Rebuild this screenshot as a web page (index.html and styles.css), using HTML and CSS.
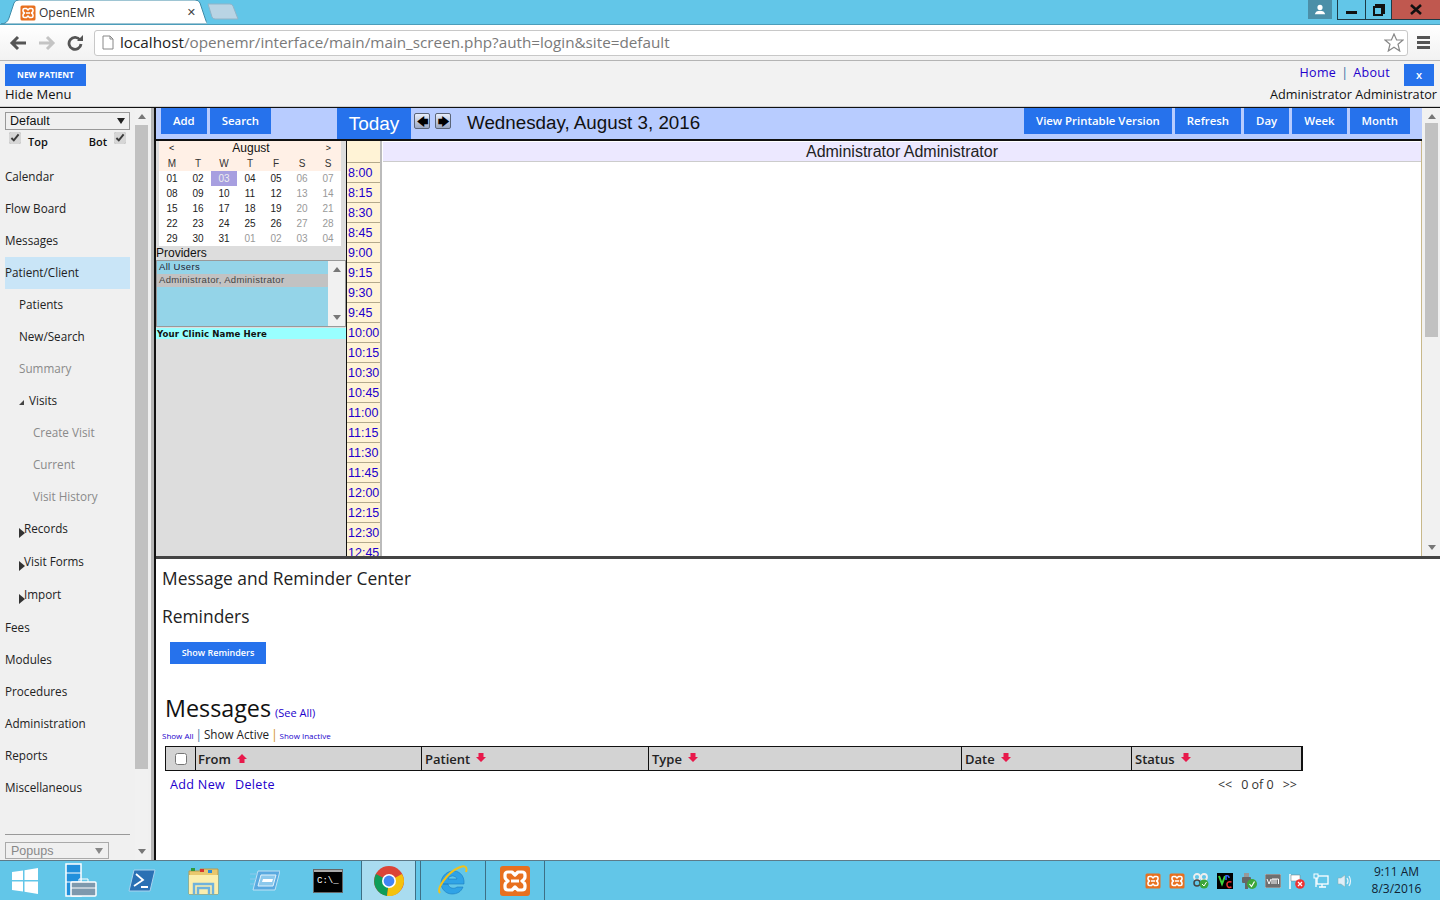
FILE: index.html
```html
<!DOCTYPE html>
<html lang="en">
<head>
<meta charset="utf-8">
<title>OpenEMR</title>
<link rel="stylesheet" href="styles.css">
</head>
<body>
<svg class="defs" width="0" height="0" aria-hidden="true">
  <symbol id="xampp" viewBox="0 0 32 32">
    <rect x="1" y="1" width="30" height="30" rx="3" fill="#e8701f"/>
    <path d="M13 7H9Q6 7 6 10V12Q6 14 9 16Q6 18 6 20V22Q6 25 9 25H13L16 22L19 25H23Q26 25 26 22V20Q26 18 23 16Q26 14 26 12V10Q26 7 23 7H19L16 10Z" fill="none" stroke="#fff" stroke-width="3.2" stroke-linejoin="round"/>
    <path d="M12 16H20" stroke="#fff" stroke-width="3"/>
  </symbol>
</svg>

<div class="tabstrip">
  <div class="tab">
    <svg class="tab-shape" width="206" height="25" viewBox="0 0 206 25"><path d="M0 25Q6 25 8 19L13 4Q14 1 18 1H194Q198 1 199 4L204 19Q205 23 207 25Z" fill="#fff" stroke="#3e8ba8"/></svg>
    <svg class="tab-icon" width="16" height="16"><use href="#xampp"/></svg>
    <span class="tab-title">OpenEMR</span>
    <span class="tab-close">✕</span>
  </div>
  <svg class="newtab" width="34" height="18" viewBox="0 0 34 18"><path d="M2 1H24Q26 1 27 3L32 16H9Q7 16 6 14Z" fill="#b9d4e4" stroke="#8fb4c8"/></svg>
  <div class="winctl">
    <div class="win-user"><svg width="12" height="12" viewBox="0 0 14 14"><circle cx="7" cy="4" r="3" fill="#fff"/><path d="M1 12Q2 8 7 8T13 12Z" fill="#fff"/></svg></div>
    <div class="win-btns">
      <div class="win-btn win-min"><i></i></div>
      <div class="win-btn win-max"><svg width="12" height="12" viewBox="0 0 12 12"><path d="M3 3V1H11V9H9M1 3H9V11H1Z" fill="none" stroke="#111" stroke-width="2"/></svg></div>
      <div class="win-btn win-close"><svg width="14" height="11" viewBox="0 0 14 11"><path d="M2 1L12 10M12 1L2 10" stroke="#111" stroke-width="2.6"/></svg></div>
    </div>
  </div>
</div>

<div class="toolbar">
  <svg class="nav-ico" width="18" height="16" viewBox="0 0 18 16"><path d="M9 2L3 8L9 14M3 8H17" fill="none" stroke="#555" stroke-width="3"/></svg>
  <svg class="nav-ico fwd" width="18" height="16" viewBox="0 0 18 16"><path d="M9 2L15 8L9 14M15 8H1" fill="none" stroke="#c4c4c4" stroke-width="3"/></svg>
  <svg class="nav-ico reload" width="16" height="16" viewBox="0 0 16 16"><path d="M13 5A6 6 0 1 0 14 9" fill="none" stroke="#555" stroke-width="2.8"/><path d="M10 6H16V0Z" fill="#555"/></svg>
  <div class="urlbar">
    <svg width="12" height="15" viewBox="0 0 12 15"><path d="M1 1H8L11 4V14H1ZM8 1V4H11" fill="#fff" stroke="#888"/></svg>
    <span class="url"><b>localhost</b>/openemr/interface/main/main_screen.php?auth=login&amp;site=default</span>
    <svg class="star" width="20" height="19" viewBox="0 0 20 19"><path d="M10 1L12.6 7H19L14 11.2L15.7 18L10 14.3L4.3 18L6 11.2L1 7H7.4Z" fill="#fff" stroke="#888" stroke-width="1.2"/></svg>
  </div>
  <div class="hamburger"><i></i><i></i><i></i></div>
</div>

<header class="apphead">
  <div class="apphead-left">
    <button class="btn btn-new">NEW PATIENT</button>
    <div class="hidemenu">Hide Menu</div>
  </div>
  <div class="apphead-right">
    <div class="toplinks">
      <a>Home</a><span class="pipe">|</span><a>About</a>
      <button class="btn btn-x">x</button>
    </div>
    <div class="username">Administrator Administrator</div>
  </div>
</header>

<div class="workspace">
  <nav class="sidebar">
    <div class="side-main">
      <div class="fake-select sel-default"><span>Default</span><i class="caret"></i></div>
      <div class="frames-row">
        <label class="chk"><input type="checkbox" checked><b>Top</b></label>
        <label class="chk"><b>Bot</b><input type="checkbox" checked></label>
      </div>
      <ul class="menu">
        <li>Calendar</li>
        <li>Flow Board</li>
        <li>Messages</li>
        <li class="active">Patient/Client</li>
        <li class="l1">Patients</li>
        <li class="l1">New/Search</li>
        <li class="l1 dim">Summary</li>
        <li class="l1 open"><i class="tri-open"></i>Visits</li>
        <li class="l2 dim">Create Visit</li>
        <li class="l2 dim">Current</li>
        <li class="l2 dim">Visit History</li>
        <li class="l1 shut"><i class="tri"></i>Records</li>
        <li class="l1 shut"><i class="tri"></i>Visit Forms</li>
        <li class="l1 shut"><i class="tri"></i>Import</li>
        <li>Fees</li>
        <li>Modules</li>
        <li>Procedures</li>
        <li>Administration</li>
        <li>Reports</li>
        <li>Miscellaneous</li>
      </ul>
      <div class="side-foot">
        <div class="fake-select sel-popups"><span>Popups</span><i class="caret"></i></div>
      </div>
    </div>
    <div class="scrollbar side-scroll"><i class="up"></i><div class="thumb"></div><i class="down"></i></div>
  </nav>

  <main class="frames">
    <section class="topframe">
      <div class="cal-toolbar">
        <div class="cal-left">
          <button class="btn btn-cal">Add</button>
          <button class="btn btn-cal">Search</button>
        </div>
        <button class="btn btn-today">Today</button>
        <div class="arrows">
          <span class="arrow-btn">🡄</span>
          <span class="arrow-btn">🡆</span>
        </div>
        <div class="cal-date">Wednesday, August 3, 2016</div>
        <div class="cal-right">
          <button class="btn btn-cal">View Printable Version</button>
          <button class="btn btn-cal">Refresh</button>
          <button class="btn btn-cal">Day</button>
          <button class="btn btn-cal">Week</button>
          <button class="btn btn-cal">Month</button>
        </div>
      </div>
      <div class="cal-body">
        <aside class="cal-side">
          <div class="mini">
            <div class="mini-head">
              <div class="mini-title"><span>&lt;</span><span class="mini-month">August</span><span>&gt;</span></div>
              <div class="mini-row"><span>M</span><span>T</span><span>W</span><span>T</span><span>F</span><span>S</span><span>S</span></div>
            </div>
            <div class="mini-row"><span>01</span><span>02</span><span class="today">03</span><span>04</span><span>05</span><span class="off">06</span><span class="off">07</span></div>
            <div class="mini-row"><span>08</span><span>09</span><span>10</span><span>11</span><span>12</span><span class="off">13</span><span class="off">14</span></div>
            <div class="mini-row"><span>15</span><span>16</span><span>17</span><span>18</span><span>19</span><span class="off">20</span><span class="off">21</span></div>
            <div class="mini-row"><span>22</span><span>23</span><span>24</span><span>25</span><span>26</span><span class="off">27</span><span class="off">28</span></div>
            <div class="mini-row"><span>29</span><span>30</span><span>31</span><span class="off">01</span><span class="off">02</span><span class="off">03</span><span class="off">04</span></div>
          </div>
          <div class="prov-label">Providers</div>
          <div class="prov-box">
            <div class="prov-list">
              <div class="prov-opt">All Users</div>
              <div class="prov-opt sel">Administrator, Administrator</div>
            </div>
            <div class="scrollbar prov-scroll"><i class="up"></i><i class="down"></i></div>
          </div>
          <div class="clinic">Your Clinic Name Here</div>
        </aside>
        <div class="times">
          <div class="time-head"></div>
          <a>8:00</a><a>8:15</a><a>8:30</a><a>8:45</a><a>9:00</a><a>9:15</a><a>9:30</a><a>9:45</a>
          <a>10:00</a><a>10:15</a><a>10:30</a><a>10:45</a><a>11:00</a><a>11:15</a><a>11:30</a><a>11:45</a>
          <a>12:00</a><a>12:15</a><a>12:30</a><a>12:45</a>
        </div>
        <div class="day">
          <div class="day-head">Administrator Administrator</div>
        </div>
        <div class="scrollbar day-scroll"><i class="up"></i><div class="thumb"></div><i class="down"></i></div>
      </div>
    </section>

    <section class="msgframe">
      <h2 class="msg-h">Message and Reminder Center</h2>
      <h2 class="msg-h rem">Reminders</h2>
      <button class="btn btn-show">Show Reminders</button>
      <div class="msg-title"><span class="msg-big">Messages</span> <a class="seeall">(See All)</a></div>
      <div class="msg-filter"><a class="tiny">Show All</a><span class="pipe2">|</span><span>Show Active</span><span class="pipe3">|</span><a class="tiny">Show Inactive</a></div>
      <div class="msg-table">
        <div class="c c0"><input type="checkbox"></div>
        <div class="c c1">From <svg class="sort" width="10" height="10" viewBox="0 0 10 10"><path d="M5 0L10 5H7.500V9H2.500V5H0Z" fill="#e8194b"/></svg></div>
        <div class="c c2">Patient <svg class="sort dn" width="10" height="10" viewBox="0 0 10 10"><path d="M5 10L10 5H7.500V1H2.500V5H0Z" fill="#e8194b"/></svg></div>
        <div class="c c3">Type <svg class="sort dn" width="10" height="10" viewBox="0 0 10 10"><path d="M5 10L10 5H7.500V1H2.500V5H0Z" fill="#e8194b"/></svg></div>
        <div class="c c4">Date <svg class="sort dn" width="10" height="10" viewBox="0 0 10 10"><path d="M5 10L10 5H7.500V1H2.500V5H0Z" fill="#e8194b"/></svg></div>
        <div class="c c5">Status <svg class="sort dn" width="10" height="10" viewBox="0 0 10 10"><path d="M5 10L10 5H7.500V1H2.500V5H0Z" fill="#e8194b"/></svg></div>
      </div>
      <div class="msg-actions">
        <div class="msg-links"><a>Add New</a><a>Delete</a></div>
        <div class="msg-page"><span>&lt;&lt;</span><span>0 of 0</span><span>&gt;&gt;</span></div>
      </div>
    </section>
  </main>
</div>

<footer class="taskbar">
  <div class="task t-start"><svg width="26" height="26" viewBox="0 0 26 26"><path d="M0 4L11 2.500V12H0ZM12.500 2.300L26 0V12H12.500ZM0 13.500H11V23.500L0 22ZM12.500 13.500H26V26L12.500 23.700Z" fill="#fff"/></svg></div>
  <div class="task t-server"><svg width="32" height="36" viewBox="0 0 32 36"><rect x="1" y="1" width="15" height="32" fill="#2190dc" stroke="#fff" stroke-width="1.500"/><path d="M1 10H16M1 19H16" stroke="#fff"/><rect x="6" y="19" width="25" height="14" rx="1" fill="#7e99ad" stroke="#fff" stroke-width="1.500"/><path d="M14 19V16H23V19M6 25H31" fill="none" stroke="#fff"/></svg></div>
  <div class="task t-ps"><svg width="28" height="24" viewBox="0 0 28 24"><path d="M6 1H27L22 22H1Z" fill="#2a70b4" stroke="#a9d2ee"/><path d="M8 5L15 11L6 17M13 18H20" fill="none" stroke="#fff" stroke-width="1.800"/></svg></div>
  <div class="task t-exp"><svg width="32" height="30" viewBox="0 0 32 30"><path d="M1 5H12V3H30V28H1Z" fill="#e9c86e" stroke="#b89a4c"/><path d="M3 2H7V5H3Z" fill="#2d9a3d"/><path d="M12 3H16V6H12Z" fill="#d8362e"/><path d="M20 4H24V7H20Z" fill="#2c8cd8"/><path d="M1 9H30V28H1Z" fill="#fbeeae"/><path d="M6 28V18H25V28M10 28V22H21V28" fill="none" stroke="#6fb2dc" stroke-width="2.400"/></svg></div>
  <div class="task t-win"><svg width="30" height="22" viewBox="0 0 30 22"><path d="M8 1H30L25 20H3Z" fill="#5aa9e0" stroke="#bfe2f5"/><path d="M11 5H26L23 16H8Z" fill="#8cc8ec" stroke="#e0f2fb"/><path d="M13 9H23L22 12H12Z" fill="#fff"/><path d="M0 4H8M0 9H6M0 14H4" stroke="#8cc8ec"/></svg></div>
  <div class="task t-cmd"><span class="cmd">C:\_</span></div>
  <div class="task t-chrome"><svg width="30" height="30" viewBox="0 0 30 30"><circle cx="15" cy="15" r="15" fill="#db4437"/><path d="M15 15L2 8A15 15 0 0 0 13 30Z" fill="#0f9d58"/><path d="M15 15L28 8A15 15 0 0 1 13 30Z" fill="#f4c20d"/><circle cx="15" cy="15" r="7" fill="#fff"/><circle cx="15" cy="15" r="5.400" fill="#4285f4"/></svg></div>
  <div class="task t-ie"><svg width="32" height="32" viewBox="0 0 32 32"><path d="M6 19H27C28 10 21 5 15 6C8 7 4 13 4 18C4 24 9 29 15 29C20 29 24 27 26 22H20C18 24 12 24 11 19ZM11 14C12 10 19 10 20 14Z" fill="#2fa3e6" stroke="#1b7cc0" stroke-width=".6"/><path d="M3 28C-1 24 10 8 21 3C27 0 31 1 29 7" fill="none" stroke="#f2c21b" stroke-width="2"/></svg></div>
  <div class="task t-xampp"><svg width="32" height="32"><use href="#xampp"/></svg></div>
  <div class="tray">
    <svg width="16" height="16"><use href="#xampp"/></svg>
    <svg width="16" height="16"><use href="#xampp"/></svg>
    <svg width="16" height="16" viewBox="0 0 16 16"><circle cx="4" cy="4" r="3" fill="none" stroke="#eee" stroke-width="1.800"/><circle cx="11" cy="4" r="3" fill="none" stroke="#eee" stroke-width="1.800"/><circle cx="4" cy="10" r="3" fill="none" stroke="#444" stroke-width="1.500"/><circle cx="11" cy="11" r="4.500" fill="#3da63a"/><path d="M9 11L11 13L13.500 9" fill="none" stroke="#fff"/></svg>
    <svg width="16" height="16" viewBox="0 0 16 16"><rect width="16" height="16" fill="#000"/><path d="M2 3L5 11L8 3" fill="none" stroke="#3bd43b" stroke-width="2"/><path d="M9 7V2M9 3Q12 2 12 5" fill="none" stroke="#3366ff" stroke-width="1.500"/><path d="M14.500 9Q9.500 8 10 12Q10.500 15.500 14.500 14" fill="none" stroke="#ee3030" stroke-width="1.500"/></svg>
    <svg width="16" height="16" viewBox="0 0 16 16"><rect x="3" y="0" width="5" height="4" fill="#999"/><rect x="1" y="4" width="9" height="6" rx="1" fill="#666"/><rect x="4" y="10" width="3" height="6" fill="#666"/><circle cx="11" cy="11" r="5" fill="#3da63a"/><path d="M8.500 11L10.500 13.500L13.500 8.500" fill="none" stroke="#fff" stroke-width="1.200"/></svg>
    <svg width="16" height="14" viewBox="0 0 16 14"><rect width="16" height="14" rx="1" fill="#6f6f6f" stroke="#ddd" stroke-width=".6"/><path d="M2 5L4 10L6 5M7 10V5H9V10M9 5H11V10M11 5H13.500V10" fill="none" stroke="#fff"/></svg>
    <svg width="16" height="16" viewBox="0 0 16 16"><path d="M1 1V16" stroke="#fff" stroke-width="1.500"/><path d="M2 2H11V8H2Z" fill="#fff" stroke="#777" stroke-width=".5"/><circle cx="11" cy="11" r="4.800" fill="#e33"/><path d="M9 9L13 13M13 9L9 13" stroke="#fff" stroke-width="1.200"/></svg>
    <svg width="16" height="16" viewBox="0 0 16 16"><rect x="4" y="3" width="11" height="8" fill="none" stroke="#fff" stroke-width="1.300"/><rect x="1" y="1" width="4" height="4" fill="#62c6e8" stroke="#fff"/><path d="M3 5V14M6 14H13M9 11V14" stroke="#fff" stroke-width="1.300"/></svg>
    <svg width="16" height="16" viewBox="0 0 16 16"><path d="M1 5H4L8 2V14L4 11H1Z" fill="#dfeef7" stroke="#8aa" stroke-width=".5"/><path d="M10 5Q12 8 10 11M12 3Q15 8 12 13" fill="none" stroke="#e6f3fa" stroke-width="1.200"/></svg>
  </div>
  <div class="clock"><div>9:11 AM</div><div>8/3/2016</div></div>
</footer>
</body>
</html>
```
FILE: styles.css
```css
* { box-sizing: border-box; }
html, body { margin: 0; height: 100%; }
body {
  width: 1440px; height: 900px; overflow: hidden;
  display: flex; flex-direction: column;
  font-family: "Open Sans", "Noto Sans", sans-serif;
  background: #f2f2f2; color: #111;
}
.defs { position: absolute; }
a { color: #2200cc; }
.btn {
  border: 0; margin: 0; padding: 0; background: #2672ec; color: #fff;
  font-family: "Open Sans", sans-serif; font-weight: 600;
  display: flex; align-items: center; justify-content: center;
}

/* browser chrome */
.tabstrip {
  height: 25px; flex: none; display: flex; align-items: flex-end;
  background: #62c6e8; border-bottom: 1px solid #4b9dba;
}
.tab {
  position: relative; width: 206px; height: 25px; margin-left: 1px; flex: none;
  display: flex; align-items: center; padding: 2px 0 0 19px;
}
.tab-shape { position: absolute; left: 0; top: 0; }
.tab-icon { position: relative; margin-right: 3px; }
.tab-title { position: relative; font-size: 12px; font-family: "Open Sans", sans-serif; color: #333; flex: 1; }
.tab-close { position: relative; font-size: 11px; color: #444; margin-right: 11px; font-family: "DejaVu Sans", sans-serif; font-weight: bold; }
.newtab { margin: 0 0 3px -1px; flex: none; }
.winctl { margin-left: auto; align-self: flex-start; display: flex; height: 20px; }
.win-user { width: 24px; height: 19px; background: #4b8fa8; display: flex; align-items: center; justify-content: center; margin-right: 5px; }
.win-btns { display: flex; height: 20px; border: 1px solid #1d3a46; border-top: 0; border-right: 0; }
.win-btn { display: flex; align-items: center; justify-content: center; height: 19px; }
.win-min { width: 28px; border-right: 1px solid #1d3a46; }
.win-min i { width: 11px; height: 3px; background: #111; margin-top: 5px; }
.win-max { width: 26px; border-right: 1px solid #1d3a46; }
.win-close { width: 48px; background: #c0584f; }

.toolbar {
  height: 36px; flex: none; display: flex; align-items: center;
  padding: 0 8px 0 9px; border-bottom: 1px solid #b4b4b4;
  background: linear-gradient(#fff, #f2f2f2);
}
.nav-ico { flex: none; }
.fwd { margin-left: 11px; }
.reload { margin-left: 11px; margin-right: 11px; }
.urlbar {
  width: 1314px; height: 26px; display: flex; align-items: center; padding: 0 3px 0 7px;
  background: #fff; border: 1px solid #c8c8c8; border-radius: 3px;
}
.url { margin-left: 6px; margin-top: -1px; font-size: 15.250px; color: #7a7a7a; font-family: "Open Sans", sans-serif; white-space: nowrap; }
.url b { font-weight: 400; color: #222; }
.star { margin-left: auto; }
.hamburger { margin-left: 9px; display: flex; flex-direction: column; gap: 2px; }
.hamburger i { display: block; width: 13px; height: 3px; background: #555; }

/* app header */
.apphead { height: 46px; flex: none; display: flex; justify-content: space-between; padding: 3px 3px 0 5px; border-bottom: 1px solid #d0d0d0; }
.btn-new { width: 81px; height: 22px; font-size: 8.400px; font-weight: 700; padding-bottom: 1px; }
.hidemenu { font-size: 13px; line-height: 17px; color: #111; font-weight: 500; }
.apphead-right { display: flex; flex-direction: column; align-items: flex-end; }
.toplinks { display: flex; align-items: flex-start; font-size: 12.500px; letter-spacing: .3px; line-height: 17px; height: 22px; margin-right: 3px; }
.pipe { margin: 0 5px; color: #2a70a0; }
.btn-x { width: 30px; height: 22px; margin-left: 14px; font-size: 11px; letter-spacing: 0; padding-bottom: 2px; }
.username { font-size: 12.700px; line-height: 17px; font-weight: 500; }

/* workspace */
.workspace { flex: 1; min-height: 0; display: flex; border-top: 1px solid #111; }
.sidebar { width: 156px; flex: none; display: flex; background: #f0f0f0; border-right: 2px solid #111; }
.side-main { width: 135px; flex: none; padding-left: 5px; display: flex; flex-direction: column; }
.fake-select {
  display: flex; align-items: center; justify-content: space-between;
  border: 1px solid #999; height: 18px; font-size: 12.500px; padding: 0 4px;
  font-family: "Liberation Sans", sans-serif;
}
.sel-default { width: 125px; margin-top: 4px; }
.caret { width: 0; height: 0; border: 4px solid transparent; border-top: 6px solid #222; border-bottom: 0; }
.frames-row { display: flex; justify-content: space-between; width: 125px; height: 31px; font-size: 11px; padding: 2px 4px 0 4px; }
.chk { display: flex; align-items: flex-start; gap: 7px; }
.chk b { margin-top: 2px; font-weight: 600; }
.chk input { width: 12px; height: 12px; margin: 0; accent-color: #d6d6d6; }
.menu { list-style: none; margin: 0; padding: 0; width: 125px; font-size: 11.700px; }
.menu li { height: 32px; line-height: 30px; color: #222; white-space: nowrap; }
.menu .active { background: #c9e5f7; }
.menu .l1 { padding-left: 14px; }
.menu .l2 { padding-left: 28px; }
.menu .dim { color: #8a8a8a; }
.menu .open { display: flex; align-items: center; padding-bottom: 2px; }
.tri-open { width: 0; height: 0; border-left: 5px solid transparent; border-bottom: 5px solid #444; margin: 4px 5px 0 0; }
.menu .shut { display: flex; align-items: center; height: 33px; line-height: 1; padding-bottom: 2px; }
.tri { width: 0; height: 0; border: 5px solid transparent; border-left: 6px solid #333; border-right: 0; margin: 9px -1px 0 0; }
.side-foot { margin-top: auto; width: 125px; border-top: 1px solid #999; padding: 7px 0 0; height: 26px; }
.sel-popups { width: 104px; height: 17px; color: #888; font-size: 12.500px; padding: 0 5px; border-color: #aaa; }
.sel-popups .caret { border-top-color: #888; }

.scrollbar { display: flex; flex-direction: column; align-items: center; background: #f1f1f1; }
.scrollbar .up, .scrollbar .down { width: 0; height: 0; border: 4px solid transparent; flex: none; }
.scrollbar .up { border-bottom: 5px solid #777; border-top: 0; margin-top: 6px; }
.scrollbar .down { border-top: 5px solid #777; border-bottom: 0; margin-top: auto; margin-bottom: 6px; }
.scrollbar .thumb { background: #c1c1c1; }
.side-scroll { width: 13px; }
.side-scroll .thumb { width: 13px; height: 644px; margin-top: 6px; }
.sidebar::after { content: ""; width: 3px; background: #b5b5b5; margin-left: 3px; }

.frames { flex: 1; min-width: 0; display: flex; flex-direction: column; }

/* top frame */
.topframe { height: 451px; flex: none; display: flex; flex-direction: column; border-bottom: 3px solid #444; overflow: hidden; }
.cal-toolbar { height: 33px; flex: none; display: flex; background: #b8ccff; border-bottom: 2px solid #111; padding-left: 5px; padding-right: 30px; }
.cal-left { display: flex; gap: 3px; width: 176px; align-items: flex-start; }
.btn-cal { height: 26px; font-size: 11.400px; padding: 0 12px 2px; }
.btn-today { width: 74px; height: 31px; font-size: 19px; font-weight: 400; font-family: "Liberation Sans", sans-serif; }
.arrows { display: flex; gap: 5px; margin: 5px 0 0 3px; }
.arrow-btn {
  width: 16px; height: 16px; display: flex; align-items: center; justify-content: center;
  background: linear-gradient(#e8eefc, #9aa8c4); border: 1px solid #5a6478; border-radius: 2px;
  font-size: 11px; line-height: 1; color: #000; font-family: "DejaVu Sans", sans-serif; font-weight: bold;
}
.cal-date { margin-left: 16px; font: 18.800px/29px "Liberation Sans", sans-serif; color: #111; }
.cal-right { margin-left: auto; display: flex; gap: 3px; align-items: flex-start; }
.cal-body { flex: 1; min-height: 0; display: flex; }

.cal-side { width: 191px; flex: none; background: #ddd; border-right: 1px solid #111; font-family: "Liberation Sans", sans-serif; }
.mini { width: 182px; margin-left: 3px; background: #fff; }
.mini-head { background: #fff0e6; }
.mini-title { display: flex; justify-content: space-between; padding: 0 10px 0 10px; height: 15px; line-height: 15px; font-size: 9px; }
.mini-month { font-size: 12px; margin-left: 2px; }
.mini-row { display: grid; grid-template-columns: repeat(7, 26px); height: 15px; }
.mini-row span { text-align: center; font-size: 10px; line-height: 15px; color: #222; }
.mini-head .mini-row span { color: #333; }
.mini-row .off { color: #999; }
.mini-row .today { background: #a79fe0; color: #eee; }
.prov-label { font-size: 12px; line-height: 14px; height: 14px; }
.prov-box { height: 67px; display: flex; border: 1px solid #999; background: #94d4e8; }
.prov-list { flex: 1; font-size: 9.500px; letter-spacing: .33px; color: #444; }
.prov-opt { height: 13px; line-height: 12px; padding-left: 2px; }
.prov-opt:first-child { color: #223; }
.prov-opt.sel { background: #c2c2c2; }
.prov-scroll { width: 17px; }
.clinic { height: 11px; margin-top: 1px; background: #99ffff; font: bold 8.600px/12px "DejaVu Sans", sans-serif; padding-left: 1px; color: #111; letter-spacing: .1px; }

.times { width: 35px; flex: none; display: flex; flex-direction: column; background: #fff3d6; border-right: 2px solid #bbb; font: 12.500px/20px "Liberation Sans", sans-serif; overflow: hidden; }
.time-head { height: 21px; flex: none; }
.times a { height: 20px; flex: none; border-top: 1px solid #b3a98c; padding-left: 1px; line-height: 20px; }
.day { flex: 1; min-width: 0; background: #fff; border-right: 1px solid #c8b88a; padding: 1px 0 0 1px; }
.day-head { height: 20px; background: #ece8ff; border-bottom: 1px solid #ccc; font: 16px/19px "Liberation Sans", sans-serif; text-align: center; color: #222; }
.day-scroll { width: 18px; border-left: 1px solid #f1f1f1; margin-top: -33px; background: #f1f1f1; position: relative; }
.day-scroll .thumb { width: 13px; height: 214px; margin-top: 4px; }

/* messages */
.msgframe { flex: 1; min-height: 0; background: #fff; padding: 7px 0 0 6px; color: #222; }
.msg-h { margin: 0; font-size: 17.400px; font-weight: 400; line-height: 25px; }
.msg-h.rem { margin-top: 13px; }
.btn-show { width: 96px; height: 22px; margin: 13px 0 0 8px; font-size: 9px; font-weight: 600; padding-bottom: 1px; }
.msg-title { margin: 29px 0 0 3px; line-height: 30px; height: 30px; display: flex; align-items: baseline; gap: 4px; }
.msg-big { font-size: 23.300px; color: #111; }
.seeall { font-size: 11px; }
.msg-filter { height: 23px; line-height: 22px; font-size: 11.700px; white-space: nowrap; display: flex; gap: 2px; align-items: baseline; }
.tiny { font-size: 8px; }
.pipe2 { color: #2a70a0; }
.pipe3 { color: #d08a20; }
.msg-table {
  margin-left: 3px; width: 1138px; height: 25px; display: grid;
  grid-template-columns: 30px 226px 227px 313px 170px 1fr;
  background: #d3d3d3; border: 1px solid #111; border-width: 1px 2px 1px 1px;
  font-size: 13px; font-weight: 600;
}
.c { display: flex; align-items: center; padding-left: 3px; border-right: 1px solid #111; color: #222; gap: 6px; }
.c1 { padding-left: 2px; }
.c5 { border-right: 0; }
.c0 { justify-content: center; padding-left: 0; }
.c0 input { width: 12px; height: 12px; margin: 0; accent-color: #d6d6d6; }
.sort { flex: none; }
.sort.dn { margin-top: -4px; }
.msg-actions { display: flex; justify-content: space-between; width: 1127px; font-size: 12.600px; margin: 5px 0 0 8px; line-height: 18px; }
.msg-links { display: flex; gap: 10px; letter-spacing: .3px; }
.msg-page { display: flex; gap: 9px; font-size: 12.500px; color: #333; }

/* taskbar */
.taskbar { height: 40px; flex: none; display: flex; align-items: center; background: #62c6e8; border-top: 1px solid #5d7a88; }
.task { height: 39px; display: flex; align-items: center; justify-content: center; flex: none; }
.t-start { width: 50px; }
.t-server { width: 61px; }
.t-ps { width: 62px; }
.t-exp { width: 61px; }
.t-win { width: 61px; }
.t-cmd { width: 66px; }
.t-chrome { width: 55px; background: #a9dcf0; border-left: 1px solid #3d6f85; border-right: 1px solid #3d6f85; }
.t-ie { width: 66px; margin-left: 4px; border-left: 1px solid #3d6f85; border-right: 1px solid #3d6f85; }
.t-xampp { width: 59px; border-right: 1px solid #3d6f85; }
.cmd { width: 30px; height: 24px; background: linear-gradient(#aaa 2px, #000 2px); border: 1px solid #666; color: #fff; font: 9px/22px "Liberation Mono", monospace; padding-left: 3px; }
.tray { margin-left: auto; display: flex; align-items: center; gap: 8px; }
.clock { width: 87px; text-align: center; font: 12px/17px "Open Sans", sans-serif; color: #123; padding-bottom: 2px; }
```
